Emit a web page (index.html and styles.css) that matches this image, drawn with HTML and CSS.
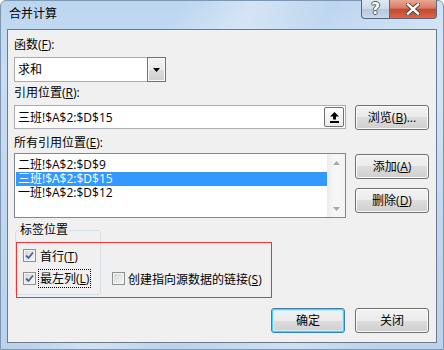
FILE: index.html
```html
<!DOCTYPE html>
<html lang="zh-CN">
<head>
    <meta charset="UTF-8">
    <title>合并计算</title>
    <link rel="stylesheet" href="styles.css">
</head>
<body>
    <div class="window">
        <div class="titlebar">
            <span class="title">合并计算</span>
            <div class="caption">
                <span class="cap-btn cap-help">?</span>
                <span class="cap-btn cap-close">
                    <svg width="14" height="12" viewBox="0 0 14 12">
                        <path d="M2 1.5 L12 10.5 M12 1.5 L2 10.5" stroke="#4a3a36" stroke-width="4.2" stroke-linecap="square"/>
                        <path d="M2 1.5 L12 10.5 M12 1.5 L2 10.5" stroke="#fff" stroke-width="2.4" stroke-linecap="square"/>
                    </svg>
                </span>
            </div>
        </div>
        <div class="client">
            <div class="label">函数(<u>F</u>):</div>
            <div class="combo">
                <span class="combo-text">求和</span>
                <span class="combo-arrow">
                    <svg width="7" height="4" viewBox="0 0 7 4"><path d="M0 0 H7 L3.5 4 Z" fill="#000"/></svg>
                </span>
            </div>

            <div class="label">引用位置(<u>R</u>):</div>
            <div class="row">
                <div class="refedit">
                    <span class="ref-text">三班!$A$2:$D$15</span>
                    <span class="collapse-btn">
                        <svg width="9" height="11" viewBox="0 0 9 11">
                            <path d="M4.5 0 L9 4.5 H6 V7.5 H3 V4.5 H0 Z" fill="#000"/>
                            <rect x="0" y="9" width="9" height="2" fill="#000"/>
                        </svg>
                    </span>
                </div>
                <button class="btn">浏览(<u>B</u>)...</button>
            </div>

            <div class="label label-all">所有引用位置(<u>E</u>):</div>
            <div class="row row-list">
                <div class="listbox">
                    <div class="items">
                        <div class="item">二班!$A$2:$D$9</div>
                        <div class="item selected">三班!$A$2:$D$15</div>
                        <div class="item">一班!$A$2:$D$12</div>
                    </div>
                    <div class="vscroll">
                        <span class="scroll-btn">
                            <svg width="7" height="4" viewBox="0 0 7 4"><path d="M0 4 H7 L3.5 0 Z" fill="#a7a7a7"/></svg>
                        </span>
                        <span class="scroll-btn">
                            <svg width="7" height="4" viewBox="0 0 7 4"><path d="M0 0 H7 L3.5 4 Z" fill="#a7a7a7"/></svg>
                        </span>
                    </div>
                </div>
                <div class="side-btns">
                    <button class="btn">添加(<u>A</u>)</button>
                    <button class="btn">删除(<u>D</u>)</button>
                </div>
            </div>

            <div class="labels-section">
                <fieldset class="group">
                    <legend>标签位置</legend>
                    <div class="check">
                        <span class="box checked">
                            <svg width="9" height="9" viewBox="0 0 9 9"><path d="M1 4.5 L3.5 7 L8 1.5" fill="none" stroke="#4c6394" stroke-width="1.8"/></svg>
                        </span>
                        <span class="check-text">首行(<u>T</u>)</span>
                    </div>
                    <div class="check">
                        <span class="box checked">
                            <svg width="9" height="9" viewBox="0 0 9 9"><path d="M1 4.5 L3.5 7 L8 1.5" fill="none" stroke="#4c6394" stroke-width="1.8"/></svg>
                        </span>
                        <span class="check-text focused">最左列(<u>L</u>)</span>
                    </div>
                </fieldset>
                <div class="check check-link">
                    <span class="box"></span>
                    <span class="check-text">创建指向源数据的链接(<u>S</u>)</span>
                </div>
                <div class="mark"></div>
            </div>

            <div class="footer">
                <button class="btn btn-default">确定</button>
                <button class="btn">关闭</button>
            </div>
        </div>
    </div>
</body>
</html>
```

FILE: styles.css
```css
* {
    box-sizing: border-box;
}
html, body {
    margin: 0;
    padding: 0;
}
body {
    width: 444px;
    height: 350px;
    overflow: hidden;
    font-family: "Open Sans", "Noto Sans CJK SC", sans-serif;
    font-size: 12px;
    color: #000;
    background: #fff;
}
u {
    text-decoration-thickness: 1px;
    text-underline-offset: 1px;
}

/* cadre de la fenêtre */
.window {
    width: 444px;
    height: 350px;
    border: 1px solid #7d96b2;
    border-radius: 6px 6px 0 0;
    padding: 0 6px 6px;
    display: flex;
    flex-direction: column;
    background:
        linear-gradient(115deg, rgba(255,255,255,0) 30%, rgba(255,255,255,0.35) 42%, rgba(255,255,255,0) 55%, rgba(255,255,255,0.3) 75%, rgba(255,255,255,0) 90%),
        linear-gradient(to bottom, #bcd5ef 0%, #c8ddf3 20%, #bad2ec 100%);
}
.titlebar {
    height: 28px;
    display: flex;
    justify-content: space-between;
    align-items: flex-start;
}
.title {
    padding: 5px 0 0 2px;
    line-height: 16px;
}
.caption {
    display: flex;
    margin-top: -1px;
}
.cap-btn {
    height: 19px;
    display: flex;
    align-items: center;
    justify-content: center;
    border: 1px solid #55687f;
    border-top: none;
}
.cap-help {
    width: 28px;
    border-right: none;
    border-radius: 0 0 0 4px;
    background: linear-gradient(to bottom, #dfe9f4 0%, #cbdaeb 48%, #b5c8dd 52%, #c9d9ea 100%);
    color: #fff;
    font-weight: bold;
    font-size: 15px;
    font-family: "DejaVu Sans", sans-serif;
    text-shadow: 1px 0 0 #4e5c6c, -1px 0 0 #4e5c6c, 0 1px 0 #4e5c6c, 0 -1px 0 #4e5c6c;
    line-height: 18px;
}
.cap-close {
    width: 48px;
    border-radius: 0 0 4px 0;
    background: linear-gradient(to bottom, #e9a795 0%, #db7a63 45%, #c8472f 52%, #d3674f 100%);
}

/* zone client */
.client {
    height: 314px;
    border: 1px solid #6a7b90;
    background: #f0f0f0;
    padding: 7px 7px 0 6px;
}
.label {
    line-height: 16px;
}
.combo {
    margin-top: 4px;
    width: 152px;
    height: 25px;
    display: flex;
    border: 1px solid #acacac;
    background: #fff;
}
.combo-text {
    flex: 1;
    padding-left: 3px;
    line-height: 23px;
}
.combo-arrow {
    width: 19px;
    height: 25px;
    margin: -1px -1px 0 0;
    display: flex;
    align-items: center;
    justify-content: center;
    border: 1px solid #707070;
    box-shadow: inset 0 0 0 1px #fbfbfb;
    background: linear-gradient(to bottom, #f2f2f2 0%, #ebebeb 50%, #dddddd 50%, #cfcfcf 100%);
}
.label + .combo + .label {
    margin-top: 3px;
}
.row {
    display: flex;
    align-items: flex-start;
    gap: 9px;
    margin-top: 4px;
}
.refedit {
    width: 332px;
    height: 24px;
    display: flex;
    align-items: center;
    border: 1px solid #abadb3;
    background: #fff;
}
.ref-text {
    flex: 1;
    padding-left: 3px;
}
.collapse-btn {
    width: 20px;
    height: 20px;
    margin-right: 1px;
    display: flex;
    align-items: center;
    justify-content: center;
    border: 1px solid #707070;
    border-radius: 2px;
    background: linear-gradient(to bottom, #fdfdfd, #ececec);
}
.btn {
    width: 74px;
    height: 25px;
    padding: 0;
    font: inherit;
    color: #000;
    line-height: 22px;
    border: 1px solid #707070;
    border-radius: 3px;
    box-shadow: inset 0 0 0 1px #fbfbfb;
    background: linear-gradient(to bottom, #f2f2f2 0%, #ebebeb 50%, #dddddd 50%, #cfcfcf 100%);
}
.btn-default {
    border-color: #3c7fb1;
    box-shadow: inset 0 0 0 1px #4ed2f7, inset 0 0 0 2px #c3eefc;
}
.label-all {
    margin-top: 5px;
}
.row-list {
    margin-top: 2px;
}
.listbox {
    width: 332px;
    height: 65px;
    display: flex;
    border: 1px solid #828790;
    background: #fff;
}
.items {
    flex: 1;
    padding: 4px 0 0 1px;
}
.item {
    height: 14px;
    line-height: 14px;
    padding-left: 2px;
    white-space: nowrap;
}
.item.selected {
    background: #3399ff;
    color: #fff;
}
.vscroll {
    width: 18px;
    display: flex;
    flex-direction: column;
    justify-content: space-between;
    background: linear-gradient(to right, #ececec, #f7f7f7 40%, #f3f3f3);
}
.scroll-btn {
    height: 17px;
    display: flex;
    align-items: center;
    justify-content: center;
}
.side-btns {
    display: flex;
    flex-direction: column;
    gap: 9px;
    margin-top: 1px;
}

/* groupe des étiquettes */
.labels-section {
    position: relative;
    display: flex;
    align-items: flex-start;
    margin-top: 4px;
}
.group {
    width: 86px;
    margin: 0 0 0 1px;
    padding: 8px 0 6px 3px;
    border: 1px solid #d5dfe5;
    border-radius: 3px;
    display: flex;
    flex-direction: column;
    gap: 4px;
}
.group legend {
    padding: 0 1px;
    line-height: 16px;
}
.check {
    height: 19px;
    display: flex;
    align-items: center;
    margin-left: 4px;
    white-space: nowrap;
}
.box {
    width: 13px;
    height: 13px;
    flex: none;
    display: flex;
    align-items: center;
    justify-content: center;
    border: 1px solid #8e8f8f;
    box-shadow: inset 0 0 0 1px #f4f4f4;
    background: linear-gradient(135deg, #cfd2d6 0%, #e9eaeb 60%, #f6f6f6 100%);
    margin-right: 4px;
}
.check-text.focused {
    margin-left: -2px;
    padding: 0 1px;
    line-height: 17px;
    border: 1px dotted #000;
}
.check-link {
    margin: 47px 0 0 11px;
}
.check-link .box {
    margin-right: 3px;
}
.mark {
    position: absolute;
    left: 2px;
    top: 20px;
    width: 256px;
    height: 56px;
    border: 1px solid #e5383b;
    pointer-events: none;
}
.footer {
    display: flex;
    justify-content: flex-end;
    gap: 10px;
    margin-top: 13px;
}
```
